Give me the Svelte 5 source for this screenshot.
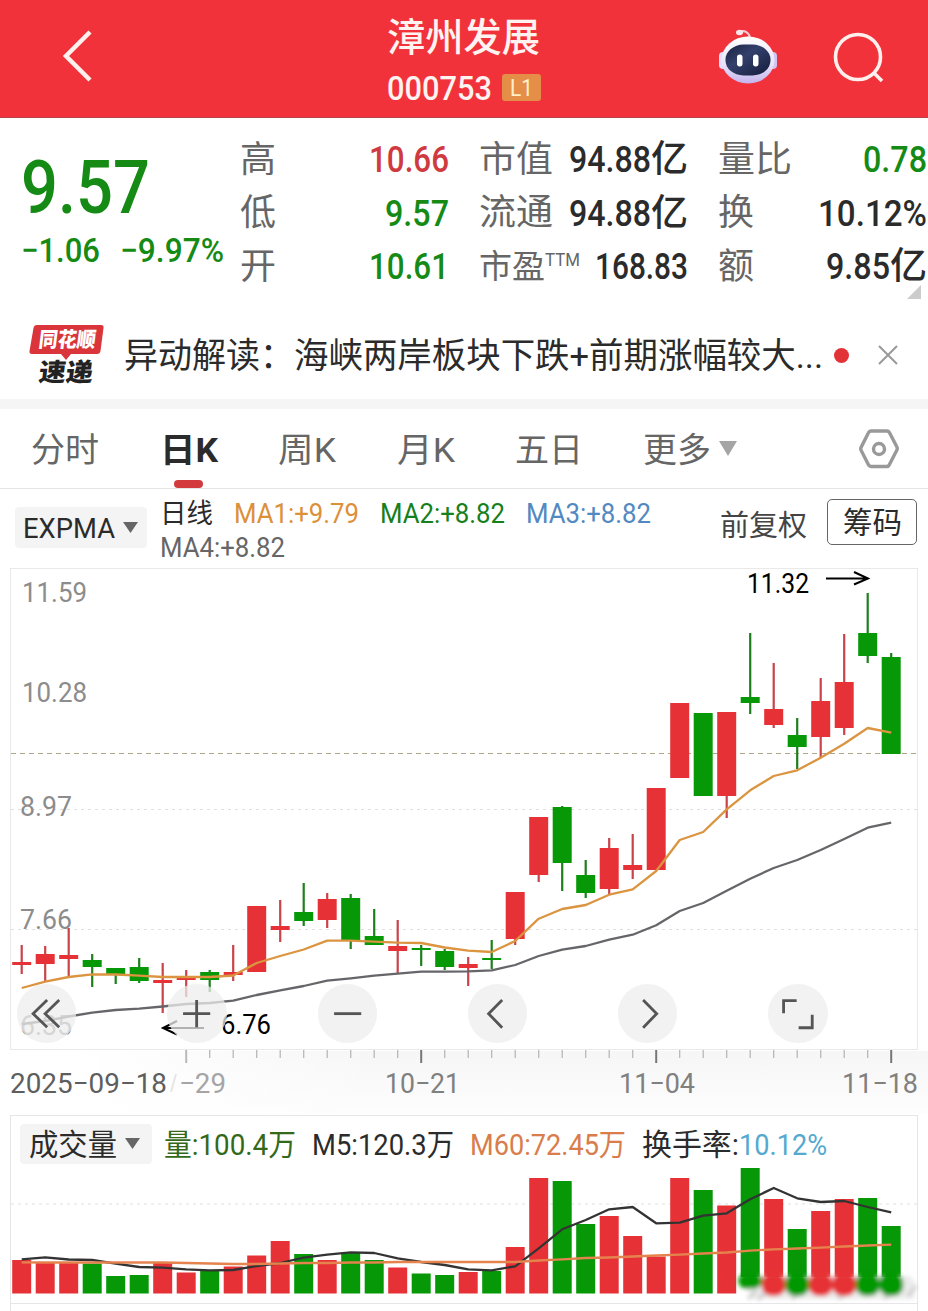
<script>
  const quotes = [
    [
      { label: '高', lw: 36, num: '10.66', nw: 80, tone: 'up' },
      { label: '低', lw: 36, num: '9.57', nw: 64, tone: 'down' },
      { label: '开', lw: 36, num: '10.61', nw: 80, tone: 'down' }
    ],
    [
      { label: '市值', lw: 74, num: '94.88', nw: 82, unit: '亿' },
      { label: '流通', lw: 74, num: '94.88', nw: 82, unit: '亿' },
      { label: '市盈', lw: 66, sup: 'TTM', num: '168.83', nw: 93 }
    ],
    [
      { label: '量比', lw: 74, num: '0.78', nw: 64, tone: 'down' },
      { label: '换', lw: 36, num: '10.12%', nw: 109 },
      { label: '额', lw: 36, num: '9.85', nw: 64, unit: '亿' }
    ]
  ];

  const tabs = [
    { name: '分时', w: 68 },
    { name: '日K', w: 58, active: true },
    { name: '周K', w: 58 },
    { name: '月K', w: 58 },
    { name: '五日', w: 68 }
  ];

  // up, high, body top, body bottom, low, volume top
  const candles = [
    [1, 945, 962, 965, 974, 1260],
    [1, 946, 954, 964, 981, 1263],
    [1, 928, 955, 959, 977, 1262.5],
    [0, 954, 960, 967, 987, 1263.5],
    [0, 968, 968, 975, 984, 1276],
    [0, 958, 967, 981, 983, 1275],
    [1, 963, 980, 983, 1013, 1263],
    [1, 970, 978, 980, 997, 1272.5],
    [0, 970, 972, 980, 992, 1271],
    [1, 945, 972, 975, 981, 1266.5],
    [1, 906, 906, 972, 972, 1255.5],
    [1, 900, 926, 930, 942, 1241],
    [0, 883, 912, 921, 926, 1254],
    [1, 893, 899, 920, 928, 1260],
    [0, 894, 898, 940, 949, 1252.5],
    [0, 909, 936, 945, 945, 1260],
    [1, 920, 946, 951, 973, 1267.5],
    [0, 945, 948, 950, 966, 1273.5],
    [0, 949, 951, 967, 970, 1275],
    [1, 957, 964, 968, 986, 1272],
    [0, 940, 958, 960, 969, 1271],
    [1, 892, 892, 939, 945, 1247],
    [1, 817, 817, 875, 882, 1178],
    [0, 806, 807, 863, 891, 1181],
    [0, 860, 875, 893, 898, 1224],
    [1, 838, 848, 889, 894, 1216],
    [1, 834, 865, 870, 879, 1236],
    [1, 788, 788, 870, 870, 1256.5],
    [1, 703, 703, 778, 778, 1178],
    [0, 713, 713, 796, 796, 1190],
    [1, 712, 712, 796, 818, 1205.5],
    [0, 633, 697, 703, 714, 1168],
    [1, 663, 709, 725, 728, 1199],
    [0, 718, 735, 747, 769, 1229],
    [1, 678, 701, 737, 758, 1211],
    [1, 634, 682, 728, 735, 1199],
    [0, 593, 633, 656, 663, 1198],
    [0, 653, 657, 754, 754, 1226]
  ];

  const ma1 = [988, 981.7, 977, 974.3, 974.5, 975.7, 977, 977, 977, 975.5, 963, 956, 949.5, 940.7, 940.7, 941.7, 942.7, 943, 947.5, 950.7, 952, 941, 918.7, 909, 905, 894.7, 889.3, 871, 840, 832, 809.3, 790.3, 776, 770.3, 757.7, 743.7, 728, 732.7];
  const ma4 = [1024, 1021, 1016.5, 1012.7, 1010, 1008.7, 1006.5, 1004, 1003, 1000.7, 995, 990.3, 986, 980.7, 978.3, 975.7, 973.7, 971.7, 971.7, 971.3, 970.3, 965, 956, 949.7, 946, 939.7, 934.7, 925.3, 911, 903, 890.7, 878.7, 868, 860, 850, 839, 827.7, 822.7];
  const m5 = [1259.3, 1257.3, 1259.5, 1260, 1263.7, 1267, 1267.7, 1269.3, 1270.3, 1270, 1266, 1263, 1257.7, 1254.7, 1252.3, 1253, 1258.3, 1262, 1265, 1269.3, 1270.3, 1266.3, 1248.3, 1229.3, 1220, 1209.3, 1207, 1223.3, 1222.7, 1215.7, 1213.3, 1199.3, 1188, 1198.3, 1202, 1201, 1207, 1212.3];
  const m60 = [1262.3, 1262.5, 1262.5, 1262.5, 1262.5, 1262.5, 1262.5, 1263, 1263.5, 1264, 1264, 1263.5, 1263, 1263, 1262.5, 1262.5, 1262, 1262, 1262, 1262, 1262, 1262, 1260.5, 1259.3, 1258, 1257.5, 1256.5, 1255.5, 1254.7, 1253.5, 1252.5, 1250.7, 1249.3, 1248.5, 1247.7, 1246.5, 1245.5, 1244.7];

  const priceLabels = [
    ['11.59', 22, 602, 65],
    ['10.28', 22, 702, 65],
    ['8.97', 20, 816, 52],
    ['7.66', 20, 929, 52],
    ['6.35', 20, 1035, 52]
  ];

  const x = (i) => 21.7 + i * 23.5;
  const points = (values) => values.map((v, i) => `${x(i)},${v}`).join(' ');
</script>

<!-- text fitted to a given width -->
{#snippet fit(text, size, width, cls = '')}
  <svg class="fit {cls}" {width} height={size}>
    <text y={size * 0.87} font-size={size} textLength={width} lengthAdjust="spacingAndGlyphs">{text}</text>
  </svg>
{/snippet}

<div class="page">
  <header>
    <svg class="back" width="32" height="54" viewBox="0 0 32 54"><path d="M28 4 4 28l24 24" /></svg>
    <div class="title">
      {@render fit('漳州发展', 39, 153, 'medium')}
      <div class="code">
        {@render fit('000753', 34, 105, 'medium')}
        <span class="badge">{@render fit('L1', 24, 23)}</span>
      </div>
    </div>
    <svg class="robot" width="60" height="58" viewBox="0 0 60 58">
      <defs>
        <linearGradient id="shell" x1="0" y1="0" x2="0" y2="1">
          <stop offset="0" stop-color="#fff" />
          <stop offset=".6" stop-color="#e9e2fa" />
          <stop offset="1" stop-color="#c3b4ec" />
        </linearGradient>
        <linearGradient id="visor" x1="0" y1="0" x2="1" y2="1">
          <stop offset="0" stop-color="#1a2040" />
          <stop offset=".4" stop-color="#33406c" />
          <stop offset="1" stop-color="#141c3a" />
        </linearGradient>
      </defs>
      <path d="M21 4.500C26 1.500 31 4 32 10" fill="none" stroke="#f7c9d2" stroke-width="2.200" />
      <ellipse cx="21.500" cy="4.500" rx="3.500" ry="2.800" fill="#fbe4ea" />
      <rect x="1" y="24" width="8" height="17" rx="4" fill="#e4dcfa" />
      <rect x="51" y="24" width="8" height="17" rx="4" fill="#d0c4f2" />
      <ellipse cx="30" cy="32" rx="26.500" ry="23.500" fill="url(#shell)" />
      <rect x="7.500" y="16.500" width="45" height="31" rx="18" ry="15" fill="url(#visor)" />
      <rect x="19" y="26.500" width="5.500" height="12" rx="2.700" fill="#fff" />
      <rect x="35" y="26.500" width="5.500" height="12" rx="2.700" fill="#fff" />
    </svg>
    <svg class="search" width="52" height="52" viewBox="0 0 52 52"><circle cx="25" cy="25" r="22.500" /><path d="m40 40 9 9" /></svg>
  </header>

  <section class="quote">
    <div class="price">
      {@render fit('9.57', 74, 129, 'down medium')}
      <div class="change">
        {@render fit('−1.06', 34, 79, 'down medium')}
        {@render fit('−9.97%', 34, 104, 'down medium')}
      </div>
    </div>
    {#each quotes as column}
      <div class="column">
        {#each column as q}
          <div class="item">
            {@render fit(q.label, q.sup ? 33 : 36, q.lw, 'label')}
            {#if q.sup}<span class="sup">{@render fit(q.sup, 18, 35, 'label')}</span>{/if}
            <span class="value">
              {@render fit(q.num, 37, q.nw, 'medium ' + (q.tone ?? ''))}
              {#if q.unit}{@render fit(q.unit, 37, 37, 'medium')}{/if}
            </span>
          </div>
        {/each}
      </div>
    {/each}
    <i class="corner"></i>
  </section>

  <section class="news">
    <svg class="logo" width="76" height="62" viewBox="0 0 76 62">
      <path d="M8 1h64q3 0 2.500 3l-3 23q-.5 3-3.500 3H42l-5 6-5-6H3q-3 0-2.500-3L4.500 4Q5 1 8 1Z" fill="#d9353a" />
      <text x="12" y="23.500" font-size="21" textLength="57" lengthAdjust="spacingAndGlyphs" transform="skewX(-7)" fill="#fff">同花顺</text>
      <text x="16" y="57" font-size="25" textLength="54" lengthAdjust="spacingAndGlyphs" transform="skewX(-7)" fill="#222">速递</text>
    </svg>
    {@render fit('异动解读：', 35, 170)}
    {@render fit('海峡两岸板块下跌+前期涨幅较大...', 35, 529)}
    <i class="dot"></i>
    <svg class="close" width="20" height="20" viewBox="0 0 20 20"><path d="m1 1 18 18M19 1 1 19" /></svg>
  </section>

  <nav>
    {#each tabs as tab}
      <div class="tab" class:active={tab.active}>{@render fit(tab.name, 34, tab.w)}</div>
    {/each}
    <div class="tab more">{@render fit('更多', 34, 68)}<svg width="18" height="16"><path d="M0 0h18L9 15Z" fill="#a5a5a5" /></svg></div>
    <svg class="setting" width="40" height="40" viewBox="0 0 40 40">
      <path d="M12 2h16q1.500 0 2.300 1.300l7.500 14.500q.9 1.700 0 3.400l-7.500 14.500Q29.500 37.500 28 37.500H12q-1.500 0-2.300-1.300L2.200 21.500q-.9-1.700 0-3.400L9.700 3.300Q10.500 2 12 2Z" />
      <circle cx="20" cy="20" r="5.500" />
    </svg>
  </nav>

  <section class="indicator">
    <div class="select">{@render fit('EXPMA', 28, 92)}<svg width="15" height="12"><path d="M0 0h15L7.500 11Z" fill="#666" /></svg></div>
    <div class="averages">
      {@render fit('日线', 27, 53)}
      {@render fit('MA1:+9.79', 28, 125, 'orange')}
      {@render fit('MA2:+8.82', 28, 125, 'green')}
      {@render fit('MA3:+8.82', 28, 125, 'blue')}
      {@render fit('MA4:+8.82', 28, 125, 'grey')}
    </div>
    <div class="restore">{@render fit('前复权', 29, 87)}</div>
    <div class="chips">{@render fit('筹码', 30, 59)}</div>
  </section>

  <section class="chart">
    <svg width="928" height="547" viewBox="0 568 928 547">
      <defs>
        <linearGradient id="fade" x1="0" y1="0" x2="0" y2="1">
          <stop offset="0" stop-color="#f6f6f6" />
          <stop offset="1" stop-color="#fdfdfd" />
        </linearGradient>
        <linearGradient id="veil" x1="0" y1="0" x2="1" y2="0">
          <stop offset="0" stop-color="#fff" />
          <stop offset="1" stop-color="#fff" stop-opacity="0" />
        </linearGradient>
      </defs>
      <rect x="80" y="1051" width="848" height="62" fill="url(#fade)" />
      <rect x="80" y="1051" width="300" height="62" fill="url(#veil)" />
      <rect x="10.500" y="568.500" width="907" height="481" fill="#fff" stroke="#e9e9ea" />
      <path class="grid" d="M11 809.500H917M11 929.500H917" />
      <path class="current" d="M11 753.500H917" />
      {#each priceLabels as [text, left, y, w]}
        <text x={left} {y} font-size="28" textLength={w} lengthAdjust="spacingAndGlyphs" fill="#8c8c8c">{text}</text>
      {/each}
      {#each candles as [up, high, top, bottom, low], i}
        <g class={up ? 'rise' : 'fall'}>
          <rect class="wick" x={x(i) - 1.1} y={high} width="2.200" height={low - high} />
          <rect x={x(i) - 9.5} y={top} width="19" height={bottom - top} />
        </g>
      {/each}
      <polyline points={points(ma4)} stroke="#66666a" />
      <polyline points={points(ma1)} stroke="#db9440" />
      <text x="747" y="593" font-size="28" textLength="62" lengthAdjust="spacingAndGlyphs">11.32</text>
      <path class="arrow" d="M826 578.500h41M854 572l14 6.500-14 6" />
      <path class="arrow" d="M204 1028h-41M177 1021l-14 7 14 6.500" />
      <text x="221" y="1034" font-size="27" textLength="50" lengthAdjust="spacingAndGlyphs">6.76</text>
      {#each candles as _, i}
        {#if i >= 7}
          <path d="M{x(i)} 1050v{i % 10 === 7 ? 13 : 8}" stroke={i % 10 === 7 && i > 7 ? '#777' : '#b8b8b8'} stroke-width={i % 10 === 7 ? 2 : 1.3} />
        {/if}
      {/each}
      <g font-size="28" fill="#808080">
        <text x="10" y="1093" textLength="157" lengthAdjust="spacingAndGlyphs" fill="#5e5e5e">2025−09−18</text>
        <path d="m171 1092 5-18" stroke="#e6e6e6" stroke-width="2" />
        <text x="179" y="1093" textLength="47" lengthAdjust="spacingAndGlyphs" fill="#a5a5a5">−29</text>
        <text x="385" y="1093" textLength="75" lengthAdjust="spacingAndGlyphs">10−21</text>
        <text x="619" y="1093" textLength="76" lengthAdjust="spacingAndGlyphs">11−04</text>
        <text x="842" y="1093" textLength="76" lengthAdjust="spacingAndGlyphs">11−18</text>
      </g>
    </svg>
    <div class="tools">
      <button aria-label="最早"><svg viewBox="0 0 59 59"><path d="M30 16 16 29.500 30 43M42 16 28 29.500 42 43" /></svg></button>
      <button aria-label="放大"><svg viewBox="0 0 59 59"><path d="M16 29.500h27M29.500 16v27" /></svg></button>
      <button aria-label="缩小"><svg viewBox="0 0 59 59"><path d="M16 29.500h27" /></svg></button>
      <button aria-label="左移"><svg viewBox="0 0 59 59"><path d="M34 16 20.500 29.500 34 43.500" /></svg></button>
      <button aria-label="右移"><svg viewBox="0 0 59 59"><path d="M25 16l13.500 13.500L25 43.500" /></svg></button>
      <button aria-label="全屏"><svg viewBox="0 0 59 59"><path d="M15.500 29V16.500H28.500M44 30.500V43.500H30.500" /></svg></button>
    </div>
  </section>

  <section class="volume">
    <div class="legend">
      <div class="select">{@render fit('成交量', 30, 88)}<svg width="15" height="12"><path d="M0 0h15L7.500 11Z" fill="#666" /></svg></div>
      <div class="values">
        {@render fit('量:100.4万', 30, 132, 'olive')}
        {@render fit('M5:120.3万', 30, 142)}
        {@render fit('M60:72.45万', 30, 156, 'copper')}
        {@render fit('换手率:', 30, 97)}
      </div>
      {@render fit('10.12%', 30, 88, 'sky')}
    </div>
    <svg width="928" height="145" viewBox="0 1166 928 145">
      <defs>
        <filter id="smudge" x="-20%" y="-50%" width="140%" height="200%"><feGaussianBlur stdDeviation="2" /></filter>
      </defs>
      <path class="grid" d="M11 1204H917" />
      <path d="M10.500 1166V1311M917.500 1166V1311M11 1303.500H917" stroke="#e6e6e8" fill="none" />
      {#each candles as [up, , , , , top], i}
        <rect class={up ? 'rise' : 'fall'} x={x(i) - 9.5} y={top} width="19" height={(i > 30 ? 1277 : 1293.5) - top} />
      {/each}
      <g filter="url(#smudge)">
        <path d="M740 1276H910L916 1284 914 1299H752Z" fill="#ebebeb" />
        <path d="m748 1299 8-8M758 1300l8-8M792 1299l9-7M838 1299l8-5M884 1299l8-6M908 1296l8-10" stroke="#c9c9c9" stroke-width="3" />
        {#each candles.slice(31) as [up], i}
          <rect class={up ? 'rise' : 'fall'} x={x(i + 31) - 12} y="1273" width="24" height={i ? 23 : 16} rx="10" />
        {/each}
      </g>
      <polyline points={points(m5)} stroke="#333" />
      <polyline points={points(m60)} stroke="#e5834e" />
    </svg>
  </section>
</div>

<style>
  :global(body) {
    background: #fff;
  }

  .page {
    width: 928px;
    height: 1311px;
    overflow: hidden;
    font-family: Roboto, "Noto Sans CJK SC", sans-serif;
    color: #2b2b2b;
  }

  svg {
    display: block;
    flex: none;
  }

  .fit {
    overflow: visible;
    fill: currentColor;
  }

  .medium { font-weight: 500; }
  .up { color: #cf3a40; }
  .down { color: #158a15; }
  .label { color: #666; }
  .orange { color: #dc9038; }
  .green { color: #16801c; }
  .blue { color: #5289c0; }
  .grey { color: #666; }
  .olive { color: #34691a; }
  .copper { color: #d87d4b; }
  .sky { color: #55a9cf; }

  header {
    display: flex;
    height: 118px;
    background: #f1323a;
    border-bottom: 1px solid #b8434b;
    color: #fff3f1;
    box-sizing: border-box;
  }

  .back {
    margin: 28px 293px 0 62px;
    fill: none;
    stroke: #fff0ee;
    stroke-width: 4.5;
  }

  .title {
    width: 154px;
    padding-top: 17px;
  }

  .code {
    display: flex;
    align-items: center;
    gap: 10px;
    margin-top: 14px;
  }

  .badge {
    display: flex;
    align-items: center;
    justify-content: center;
    width: 39px;
    height: 27px;
    border-radius: 3px;
    background: #e58e48;
    color: #fff0c8;
  }

  .robot {
    margin: 28px 0 0 177px;
  }

  .search {
    margin: 32px 0 0 55px;
    fill: none;
    stroke: #fff0ee;
    stroke-width: 3.6;
  }

  .quote {
    display: flex;
    position: relative;
    height: 187px;
  }

  .price {
    width: 220px;
    padding: 31px 0 0 21px;
    box-sizing: border-box;
  }

  .change {
    display: flex;
    gap: 20px;
    margin-top: 9px;
  }

  .column {
    width: 209px;
    margin: 0 10px 0 20px;
    padding-top: 14px;
  }

  .column:last-of-type {
    margin-right: 0;
  }

  .item {
    display: flex;
    align-items: center;
    height: 53.5px;
  }

  .sup {
    margin-top: -14px;
  }

  .value {
    display: flex;
    margin-left: auto;
  }

  .corner {
    position: absolute;
    right: 7px;
    bottom: 6px;
    border-left: 14px solid transparent;
    border-bottom: 14px solid #ccc;
  }

  .news {
    display: flex;
    align-items: center;
    height: 94px;
    padding: 6px 0 0 29px;
    box-sizing: border-box;
  }

  .logo {
    margin-right: 19px;
    overflow: visible;
    font-weight: 900;
  }

  .dot {
    width: 15px;
    height: 15px;
    margin-left: 11px;
    border-radius: 50%;
    background: #e23438;
  }

  .close {
    margin-left: 29px;
    fill: none;
    stroke: #999;
    stroke-width: 2;
  }

  nav {
    display: flex;
    align-items: center;
    height: 90px;
    padding: 0 29px 0 31px;
    border-top: 10px solid #f5f5f6;
    border-bottom: 1px solid #e4e4e4;
    box-sizing: border-box;
  }

  .tab {
    display: flex;
    align-items: center;
    height: 79px;
    margin-right: 60.5px;
    color: #666;
  }

  .tab.active {
    position: relative;
    font-weight: 700;
    color: #2b2b2b;
  }

  .tab.active::after {
    content: '';
    position: absolute;
    left: 14px;
    bottom: 0;
    width: 29px;
    height: 8px;
    border-radius: 4px;
    background: #d33a3e;
  }

  .tab.more {
    gap: 8px;
    margin-right: auto;
    margin-left: -1px;
  }

  .setting {
    fill: none;
    stroke: #999;
    stroke-width: 3.4;
  }

  .indicator {
    display: flex;
    height: 79px;
    padding-left: 15px;
  }

  .select {
    display: flex;
    align-items: center;
    gap: 8px;
    width: 132px;
    height: 41px;
    padding-left: 8px;
    border-radius: 4px;
    background: #f4f4f4;
    box-sizing: border-box;
  }

  .indicator .select {
    margin: 18px 13px 0 0;
  }

  .averages {
    display: flex;
    flex-wrap: wrap;
    align-content: flex-start;
    gap: 6px 21px;
    width: 540px;
    padding-top: 10px;
  }

  .restore {
    padding: 22px 20px 0;
    color: #444;
  }

  .chips {
    display: flex;
    align-items: center;
    justify-content: center;
    width: 90px;
    height: 46px;
    margin-top: 10px;
    border: 1px solid #666;
    border-radius: 5px;
    box-sizing: border-box;
  }

  .chart {
    position: relative;
    height: 547px;
  }

  .grid {
    stroke: #dedede;
    stroke-dasharray: 3 4;
    fill: none;
  }

  .current {
    stroke: #b0a688;
    stroke-dasharray: 5 4;
  }

  .rise { fill: #e63236; }
  .fall { fill: #069806; }
  .rise .wick { fill: #c8444a; }
  .fall .wick { fill: #1d801d; }

  polyline {
    fill: none;
    stroke-width: 2.3;
    stroke-linejoin: round;
  }

  .arrow {
    fill: none;
    stroke: #000;
    stroke-width: 2;
  }

  .tools {
    position: absolute;
    left: 17px;
    top: 416px;
    display: flex;
    gap: 91px;
  }

  .tools button {
    width: 59.3px;
    height: 59px;
    padding: 0;
    border: 0;
    border-radius: 50%;
    background: rgba(237, 237, 237, 0.75);
  }

  .tools path {
    fill: none;
    stroke: #555;
    stroke-width: 2.8;
  }

  .volume {
    height: 196px;
  }

  .legend {
    display: flex;
    align-items: center;
    height: 51px;
    margin: 0 10px;
    padding: 6px 0 0 9px;
    border: 1px solid #e6e6e8;
    border-bottom: 0;
    box-sizing: border-box;
  }

  .legend .select {
    height: 40px;
    padding-left: 9px;
    margin-right: 12px;
  }

  .values {
    display: flex;
    gap: 16px;
  }
</style>
